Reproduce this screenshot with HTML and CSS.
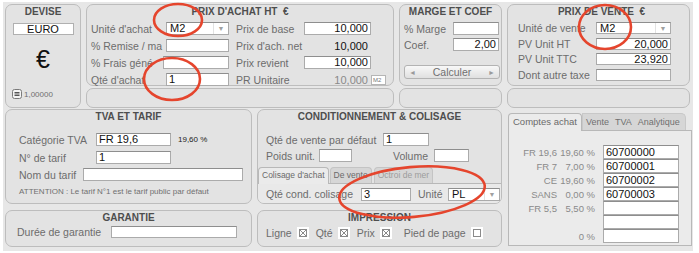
FILE: index.html
```html
<!DOCTYPE html>
<html>
<head>
    <title>Fiche article - Prix</title>
    <link rel="stylesheet" href="styles.css">
</head>
<body>
<div class="screen">
    <div class="top-row">
        <div class="panel devise">
            <div class="title">DEVISE</div>
            <div class="euro-box">EURO</div>
            <div class="euro-sign">€</div>
            <div class="rate">
                <svg class="rate-btn" viewBox="0 0 10 10"><rect x="0.5" y="0.5" width="9" height="9" rx="2" fill="#f4f4f4" stroke="#7a7a7a"/><path d="M2.5 3.5h5M2.5 5h5M2.5 6.5h5" stroke="#555"/></svg>
                <span>1,00000</span>
            </div>
        </div>

        <div class="stack achat">
            <div class="panel main">
                <div class="title">PRIX D'ACHAT HT &nbsp;€</div>
                <div class="form achat-form">
                    <span class="lbl">Unité d'achat</span>
                    <div class="select"><span>M2</span><i>▼</i></div>
                    <span class="lbl">Prix de base</span>
                    <div class="input num">10,000</div>
                    <span></span>

                    <span class="lbl">% Remise / ma</span>
                    <div class="input"></div>
                    <span class="lbl">Prix d'ach. net</span>
                    <div class="val">10,000</div>
                    <span></span>

                    <span class="lbl">% Frais géné</span>
                    <div class="input wide"></div>
                    <span class="lbl">Prix revient</span>
                    <div class="input num">10,000</div>
                    <span></span>

                    <span class="lbl">Qté d'achat</span>
                    <div class="input">1</div>
                    <span class="lbl">PR Unitaire</span>
                    <div class="val grey">10,000</div>
                    <div class="mini">M2</div>
                </div>
            </div>
            <div class="panel sub"></div>
        </div>

        <div class="stack marge">
            <div class="panel main">
                <div class="title">MARGE ET COEF</div>
                <div class="form marge-form">
                    <span class="lbl">% Marge</span>
                    <div class="input num"></div>
                    <span class="lbl">Coef.</span>
                    <div class="input num">2,00</div>
                </div>
                <div class="calc"><span class="arr">◄</span><span>Calculer</span><span class="arr">►</span></div>
            </div>
            <div class="panel sub"></div>
        </div>

        <div class="stack vente">
            <div class="panel main">
                <div class="title">PRIX DE VENTE &nbsp;€</div>
                <div class="form vente-form">
                    <span class="lbl">Unité de vente</span>
                    <div class="select"><span>M2</span><i>▼</i></div>
                    <span class="lbl">PV Unit HT</span>
                    <div class="input num">20,000</div>
                    <span class="lbl">PV Unit TTC</span>
                    <div class="input num">23,920</div>
                    <span class="lbl">Dont autre taxe</span>
                    <div class="input"></div>
                </div>
            </div>
            <div class="panel sub"></div>
        </div>
    </div>

    <div class="bottom">
        <div class="panel tva">
            <div class="title">TVA ET TARIF</div>
            <div class="form tva-form">
                <span class="lbl">Catégorie TVA</span>
                <div class="input">FR 19,6</div>
                <span class="small">19,60 %</span>
                <span class="lbl">N° de tarif</span>
                <div class="input">1</div>
                <span></span>
            </div>
            <div class="line">
                <span class="lbl">Nom du tarif</span>
                <div class="input nom"></div>
            </div>
            <div class="note">ATTENTION : Le tarif N°1 est le tarif public par défaut</div>
        </div>

        <div class="panel cond">
            <div class="title">CONDITIONNEMENT &amp; COLISAGE</div>
            <div class="line qte-line">
                <span class="lbl">Qté de vente par défaut</span>
                <div class="input">1</div>
            </div>
            <div class="line poids-line">
                <span class="lbl poids">Poids unit.</span>
                <div class="input poids-in"></div>
                <span class="lbl volume">Volume</span>
                <div class="input volume-in"></div>
            </div>
            <div class="tabs cond-tabs">
                <span class="tab active">Colisage d'achat</span>
                <span class="tab">De vente</span>
                <span class="tab off">Octroi de mer</span>
            </div>
            <div class="tab-body coli">
                <span class="lbl">Qté cond. colisage</span>
                <div class="input coli-in">3</div>
                <span class="lbl unite">Unité</span>
                <div class="select unite-sel"><span>PL</span><i>▼</i></div>
            </div>
        </div>

        <div class="accounts">
            <div class="tabs acc-tabs">
                <span class="tab active">Comptes achat</span>
                <div class="tab-strip">
                    <span class="tab">Vente</span>
                    <span class="tab">TVA</span>
                    <span class="tab">Analytique</span>
                </div>
            </div>
            <div class="acc-body">
                <span class="code">FR 19,6</span><span class="pct">19,60 %</span><div class="input">60700000</div>
                <span class="code">FR 7</span><span class="pct">7,00 %</span><div class="input">60700001</div>
                <span class="code">CE</span><span class="pct">19,60 %</span><div class="input">60700002</div>
                <span class="code">SANS</span><span class="pct">0,00 %</span><div class="input">60700003</div>
                <span class="code">FR 5,5</span><span class="pct">5,50 %</span><div class="input"></div>
                <span class="code"></span><span class="pct"></span><div class="input"></div>
                <span class="code"></span><span class="pct">0 %</span><div class="input"></div>
            </div>
        </div>

        <div class="panel garantie">
            <div class="title">GARANTIE</div>
            <div class="line">
                <span class="lbl">Durée de garantie</span>
                <div class="input gar-in"></div>
            </div>
        </div>

        <div class="panel impression">
            <div class="title">IMPRESSION</div>
            <div class="checks">
                <span class="lbl">Ligne</span>
                <svg class="chk" viewBox="0 0 12 12"><rect width="12" height="12" fill="#fff"/><rect x="2.5" y="2.5" width="7" height="7" fill="none" stroke="#8a8a8a"/><path d="M3 3l6 6M9 3l-6 6" stroke="#8a8a8a"/></svg>
                <span class="lbl">Qté</span>
                <svg class="chk" viewBox="0 0 12 12"><rect width="12" height="12" fill="#fff"/><rect x="2.5" y="2.5" width="7" height="7" fill="none" stroke="#8a8a8a"/><path d="M3 3l6 6M9 3l-6 6" stroke="#8a8a8a"/></svg>
                <span class="lbl">Prix</span>
                <svg class="chk" viewBox="0 0 12 12"><rect width="12" height="12" fill="#fff"/><rect x="2.5" y="2.5" width="7" height="7" fill="none" stroke="#8a8a8a"/><path d="M3 3l6 6M9 3l-6 6" stroke="#8a8a8a"/></svg>
                <span class="lbl pied">Pied de page</span>
                <svg class="chk" viewBox="0 0 12 12"><rect width="12" height="12" fill="#fff"/><rect x="2.5" y="2.5" width="7" height="7" fill="none" stroke="#8a8a8a"/></svg>
            </div>
        </div>
    </div>
</div>

<!-- red annotation marks drawn over the form -->
<svg class="marks" width="699" height="253" viewBox="0 0 699 253">
    <ellipse cx="178" cy="20" rx="24" ry="16"/>
    <ellipse cx="172" cy="79" rx="28" ry="21"/>
    <ellipse cx="605" cy="27" rx="26" ry="22"/>
    <ellipse cx="412" cy="192" rx="73" ry="25" transform="rotate(-5 412 192)"/>
</svg>
</body>
</html>
```

FILE: styles.css
```css
body {
    margin: 0;
    background: #fff;
    font-family: "Liberation Sans", Arial, sans-serif;
    position: relative;
}
.screen {
    margin: 2px 0 0 3px;
    width: 690px;
    height: 249px;
    box-sizing: border-box;
    padding: 2px 0 0 2px;
    background: #e7e7e7;
    display: flex;
    flex-direction: column;
    gap: 1px;
}
.panel {
    box-sizing: border-box;
    border: 1px solid #bdbdbd;
    border-radius: 7px;
    background: #e3e3e3;
}
.title {
    font-size: 10px;
    font-weight: bold;
    color: #4e4e4e;
    text-align: center;
    line-height: 12px;
    padding-top: 1px;
    white-space: nowrap;
}
.lbl {
    font-size: 10.5px;
    color: #6c6c6c;
    white-space: nowrap;
}
.input, .select {
    box-sizing: border-box;
    height: 13px;
    background: #fff;
    border: 1px solid #ababab;
    border-top-color: #8e8e8e;
    font-size: 11px;
    line-height: 11px;
    color: #111;
    padding: 0 2px;
    white-space: nowrap;
}
.num {
    text-align: right;
}
.select {
    display: flex;
    padding: 0;
}
.select span {
    flex: 1;
    padding-left: 3px;
}
.select i {
    width: 14px;
    font-style: normal;
    font-size: 7px;
    color: #a0a0a0;
    text-align: center;
    border-left: 1px solid #e2e2e2;
}

/* top row */
.top-row {
    display: flex;
    gap: 5px;
    height: 104px;
}
.devise {
    width: 76px;
    display: flex;
    flex-direction: column;
    align-items: center;
}
.euro-box {
    margin-top: 5px;
    width: 61px;
    height: 12px;
    box-sizing: border-box;
    background: #fff;
    border: 1px solid #b0b0b0;
    font-size: 11px;
    line-height: 10px;
    text-align: center;
    color: #111;
}
.euro-sign {
    font-size: 25px;
    line-height: 30px;
    margin-top: 9px;
    color: #111;
}
.rate {
    margin-top: auto;
    margin-bottom: 8px;
    align-self: flex-start;
    margin-left: 6px;
    display: flex;
    align-items: center;
    gap: 2px;
    font-size: 8px;
    color: #707070;
}
.rate-btn {
    width: 10px;
    height: 10px;
}
.stack {
    display: flex;
    flex-direction: column;
    gap: 2px;
}
.stack .main {
    height: 82px;
    padding: 0 4px;
}
.stack .sub {
    flex: 1;
}
.achat { width: 308px; }
.marge { width: 103px; }
.vente { width: 183px; }

.form {
    display: grid;
    align-items: center;
    margin-top: 4px;
}
.achat-form {
    grid-template-columns: 75px 63px 75px 67px 15px;
    grid-auto-rows: 13px;
    row-gap: 4px;
}
.achat-form .lbl:nth-child(5n+3) {
    padding-left: 7px;
}
.achat-form .wide {
    margin-left: -3px;
}
.val {
    font-size: 11px;
    color: #111;
    text-align: right;
    padding-right: 3px;
}
.val.grey {
    color: #8a8a8a;
}
.mini {
    height: 10px;
    box-sizing: border-box;
    border: 1px solid #b5b5b5;
    background: #fff;
    font-size: 6px;
    line-height: 8px;
    color: #777;
    padding-left: 1px;
}
.marge-form {
    grid-template-columns: 49px 46px;
    grid-auto-rows: 13px;
    row-gap: 3px;
}
.calc {
    margin-top: 14px;
    width: 96px;
    height: 14px;
    box-sizing: border-box;
    border: 1px solid #b3b3b3;
    border-radius: 3px;
    background: linear-gradient(#f8f8f8, #e0e0e0);
    display: flex;
    justify-content: space-between;
    align-items: center;
    padding: 0 4px;
    font-size: 10.5px;
    color: #707070;
}
.calc .arr {
    font-size: 7px;
    color: #9a9a9a;
}
.vente .main {
    padding-left: 10px;
}
.vente-form {
    grid-template-columns: 78px 75px;
    grid-auto-rows: 12px;
    row-gap: 3.5px;
}
.vente-form .input, .vente-form .select {
    height: 12px;
}

/* lower part */
.bottom {
    display: grid;
    grid-template-columns: 247px 245px 183px;
    grid-template-rows: 95px 37px;
    column-gap: 5px;
    row-gap: 6px;
}
.tva {
    padding-left: 13px;
}
.tva .title {
    margin-left: -13px;
}
.tva-form {
    grid-template-columns: 77px 75px auto;
    grid-auto-rows: 13px;
    row-gap: 5px;
    margin-top: 10px;
}
.small {
    font-size: 8px;
    color: #222;
    padding-left: 7px;
}
.line {
    display: flex;
    align-items: center;
}
.tva .line {
    margin-top: 4px;
}
.tva .line .lbl {
    width: 64px;
}
.nom {
    width: 160px;
}
.note {
    font-size: 8px;
    color: #707070;
    margin-top: 6px;
    white-space: nowrap;
}
.cond {
    display: flex;
    flex-direction: column;
}
.qte-line {
    margin: 10px 0 0 8px;
}
.qte-line .lbl {
    width: 117px;
}
.qte-line .input {
    width: 46px;
}
.poids-line {
    margin: 3px 0 0 8px;
}
.poids {
    width: 53px;
}
.poids-in {
    width: 33px;
}
.volume {
    margin-left: 41px;
    width: 41px;
}
.volume-in {
    width: 35px;
}
.tabs {
    display: flex;
    align-items: flex-end;
}
.tab {
    box-sizing: border-box;
    font-size: 8.5px;
    color: #6a6a6a;
    white-space: nowrap;
    border: 1px solid #c4c4c4;
    border-bottom: none;
    border-radius: 4px 4px 0 0;
    background: #d6d6d6;
    padding: 0 3px;
}
.tab.active {
    background: #ebebeb;
    border-color: #b8b8b8;
    position: relative;
    top: 1px;
}
.tab.off {
    color: #9c9c9c;
}
.cond-tabs {
    margin-top: 4px;
    height: 17px;
}
.cond-tabs .tab {
    height: 16px;
    line-height: 15px;
    margin-right: 2px;
}
.cond-tabs .tab.active {
    height: 17px;
    margin-right: 1px;
}
.tab-body {
    flex: 1;
    border-top: 1px solid #b8b8b8;
    background: #e9e9e9;
    border-radius: 0 0 6px 6px;
}
.coli {
    display: flex;
    padding: 4px 0 0 8px;
    align-items: flex-start;
}
.coli .lbl {
    width: 95px;
    line-height: 13px;
}
.coli-in {
    width: 50px;
}
.coli .unite {
    width: 30px;
    margin-left: 7px;
}
.unite-sel {
    width: 52px;
}
.accounts {
    grid-column: 3;
    grid-row: 1 / span 2;
    display: flex;
    flex-direction: column;
    padding: 4px 0 1px 1px;
}
.acc-tabs {
    height: 17px;
}
.acc-tabs .tab {
    font-size: 9.5px;
    line-height: 16px;
    height: 17px;
}
.acc-tabs .tab.active {
    padding: 0 4px;
    height: 18px;
}
.tab-strip {
    display: flex;
    gap: 6px;
    background: #d6d6d6;
    border: 1px solid #c8c8c8;
    border-bottom: none;
    border-radius: 0 5px 0 0;
    padding: 0 5px 0 3px;
    height: 17px;
    box-sizing: border-box;
}
.tab-strip .tab {
    border: none;
    background: none;
    padding: 0;
    font-size: 9px;
    color: #707070;
}
.acc-body {
    flex: 1;
    margin-right: -2px;
    border: 1px solid #b8b8b8;
    background: #ebebeb;
    display: grid;
    grid-template-columns: 48px 38px 84px;
    grid-auto-rows: 14px;
    align-content: start;
    align-items: center;
    column-gap: 0;
    padding-top: 14px;
}
.acc-body .code, .acc-body .pct {
    font-size: 9.5px;
    color: #8a8a8a;
    text-align: right;
}
.acc-body .input {
    height: 14px;
    margin-left: 8px;
    font-size: 11px;
    line-height: 12px;
}
.garantie .line {
    margin: 2px 0 0 11px;
}
.garantie .lbl {
    width: 94px;
}
.gar-in {
    width: 126px;
    height: 12px;
}
.checks {
    display: flex;
    align-items: center;
    margin: 3px 0 0 8px;
}
.chk {
    width: 12px;
    height: 12px;
    margin: 0 7px 0 5px;
}
.checks .pied {
    margin-left: 5px;
}
.marks {
    position: absolute;
    left: 0;
    top: 0;
    pointer-events: none;
}
.marks ellipse {
    fill: none;
    stroke: #e5452d;
    stroke-width: 2.6;
}
```
